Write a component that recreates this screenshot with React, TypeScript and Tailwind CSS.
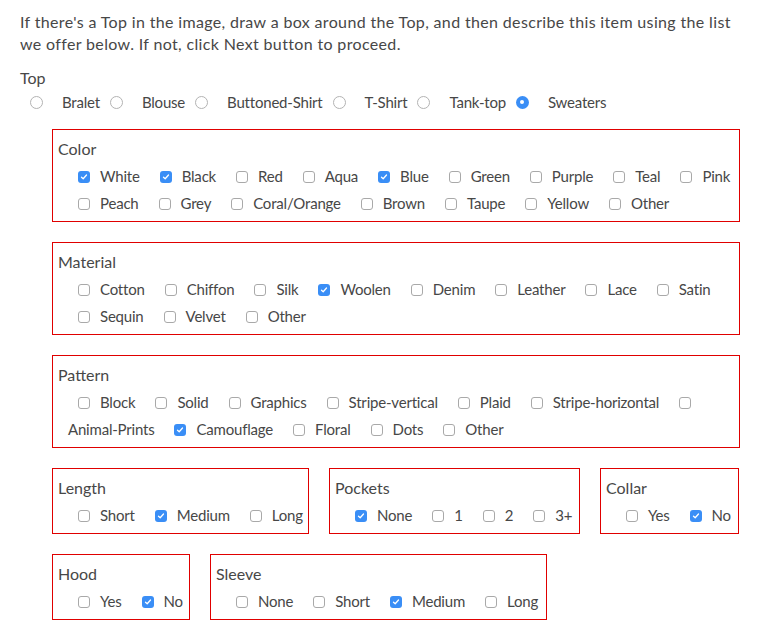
import React from 'react'

type Item = { label?: string; checked?: boolean; box?: boolean }

const font = { fontFamily: 'Lato, "Open Sans", sans-serif' }

function Check({ checked }: { checked?: boolean }) {
  if (checked) {
    return (
      <span className="inline-flex h-[12px] w-[12px] shrink-0 items-center justify-center rounded-[3px] bg-[#3a8ef6]">
        <svg width="8" height="8" viewBox="0 0 8 8">
          <path d="M1.5 4.2 L3.2 5.8 L6.5 2" fill="none" stroke="white" strokeWidth="1.3" strokeLinecap="round" strokeLinejoin="round" />
        </svg>
      </span>
    )
  }
  return <span className="inline-block h-[12px] w-[12px] shrink-0 rounded-[3px] border border-[#a9a9a9] bg-white" />
}

function Radio({ checked }: { checked?: boolean }) {
  if (checked) {
    return (
      <span className="inline-flex h-[13px] w-[13px] shrink-0 items-center justify-center rounded-full bg-[#3a8ef6]">
        <span className="h-[4px] w-[4px] rounded-full bg-white" />
      </span>
    )
  }
  return <span className="inline-block h-[13px] w-[13px] shrink-0 rounded-full border border-[#b3b3b3] bg-white" />
}

function Row({ items }: { items: Item[] }) {
  return (
    <div className="ml-[10px] flex h-[27px] items-center text-[15px] tracking-[-0.2px]">
      {items.map((it, i) => (
        <span key={i} className="flex items-center">
          {it.box !== false && (
            <span className="ml-[10px] flex">
              <Check checked={it.checked} />
            </span>
          )}
          {it.label && <span className={it.box === false ? 'mr-[10px]' : 'ml-[10px] mr-[10px]'}>{it.label}</span>}
        </span>
      ))}
    </div>
  )
}

function Group({ title, rows, width }: { title: string; rows: Item[][]; width: string }) {
  return (
    <div className={`border border-[#e00000] px-[5px] pt-[8px] pb-[4px] ${width}`}>
      <div className="mb-[3px] leading-[22px]">{title}</div>
      {rows.map((r, i) => (
        <Row key={i} items={r} />
      ))}
    </div>
  )
}

const tops = ['Bralet', 'Blouse', 'Buttoned-Shirt', 'T-Shirt', 'Tank-top', 'Sweaters']

export default function App() {
  return (
    <div className="min-h-screen bg-white px-[20px] pt-[11px] text-[16px] text-[#474747]" style={font}>
      <p className="leading-[22px] tracking-[0.35px]">
        If there's a Top in the image, draw a box around the Top, and then describe this item using the list
        <br />
        we offer below. If not, click Next button to proceed.
      </p>

      <div className="mt-[12px] leading-[22px]">Top</div>
      <div className="flex h-[26px] items-center text-[15px] tracking-[-0.2px]">
        {tops.map((t, i) => (
          <span key={t} className="flex items-center">
            <span className="ml-[10px] flex">
              <Radio checked={i === tops.length - 1} />
            </span>
            <span className="ml-[19px]">{t}</span>
          </span>
        ))}
      </div>

      <div className="mt-[14px] flex flex-col gap-[20px] pl-[32px]">
        <Group
          title="Color"
          width="w-[688px]"
          rows={[
            [
              { label: 'White', checked: true },
              { label: 'Black', checked: true },
              { label: 'Red' },
              { label: 'Aqua' },
              { label: 'Blue', checked: true },
              { label: 'Green' },
              { label: 'Purple' },
              { label: 'Teal' },
              { label: 'Pink' },
            ],
            [
              { label: 'Peach' },
              { label: 'Grey' },
              { label: 'Coral/Orange' },
              { label: 'Brown' },
              { label: 'Taupe' },
              { label: 'Yellow' },
              { label: 'Other' },
            ],
          ]}
        />
        <Group
          title="Material"
          width="w-[688px]"
          rows={[
            [
              { label: 'Cotton' },
              { label: 'Chiffon' },
              { label: 'Silk' },
              { label: 'Woolen', checked: true },
              { label: 'Denim' },
              { label: 'Leather' },
              { label: 'Lace' },
              { label: 'Satin' },
            ],
            [{ label: 'Sequin' }, { label: 'Velvet' }, { label: 'Other' }],
          ]}
        />
        <Group
          title="Pattern"
          width="w-[688px]"
          rows={[
            [
              { label: 'Block' },
              { label: 'Solid' },
              { label: 'Graphics' },
              { label: 'Stripe-vertical' },
              { label: 'Plaid' },
              { label: 'Stripe-horizontal' },
              {},
            ],
            [
              { label: 'Animal-Prints', box: false },
              { label: 'Camouflage', checked: true },
              { label: 'Floral' },
              { label: 'Dots' },
              { label: 'Other' },
            ],
          ]}
        />
        <div className="flex gap-[20px]">
          <Group title="Length" width="w-[257px]" rows={[[{ label: 'Short' }, { label: 'Medium', checked: true }, { label: 'Long' }]]} />
          <Group
            title="Pockets"
            width="w-[251px]"
            rows={[[{ label: 'None', checked: true }, { label: '1' }, { label: '2' }, { label: '3+' }]]}
          />
          <Group title="Collar" width="w-[139px]" rows={[[{ label: 'Yes' }, { label: 'No', checked: true }]]} />
        </div>
        <div className="flex gap-[20px]">
          <Group title="Hood" width="w-[138px]" rows={[[{ label: 'Yes' }, { label: 'No', checked: true }]]} />
          <Group
            title="Sleeve"
            width="w-[337px]"
            rows={[[{ label: 'None' }, { label: 'Short' }, { label: 'Medium', checked: true }, { label: 'Long' }]]}
          />
        </div>
      </div>
    </div>
  )
}
